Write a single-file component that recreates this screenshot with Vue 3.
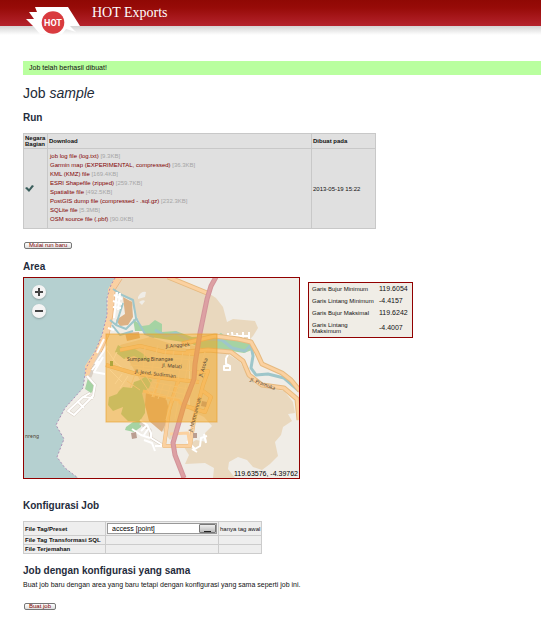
<script setup>
import { ref } from 'vue'

const files = [
  { name: 'job log file (log.txt)', size: '9.3KB' },
  { name: 'Garmin map (EXPERIMENTAL, compressed)', size: '36.3KB' },
  { name: 'KML (KMZ) file', size: '169.4KB' },
  { name: 'ESRI Shapefile (zipped)', size: '259.7KB' },
  { name: 'Spatialite file', size: '492.5KB' },
  { name: 'PostGIS dump file (compressed - .sql.gz)', size: '232.3KB' },
  { name: 'SQLite file', size: '5.3MB' },
  { name: 'OSM source file (.pbf)', size: '90.0KB' },
]

const bounds = [
  { label: 'Garis Bujur Minimum', value: '119.6054' },
  { label: 'Garis Lintang Minimum', value: '-4.4157' },
  { label: 'Garis Bujur Maksimal', value: '119.6242' },
  { label: 'Garis Lintang Maksimum', value: '-4.4007' },
]

const preset = ref('access [point]')
</script>

<template>
  <div class="page">
    <header class="banner">
      <svg class="logo" viewBox="0 0 56 30" aria-hidden="true">
        <path d="M9 1H42L54 20H44L50 26L40 23L36 28H14L8 21L0 13H8L3 6H11Z" fill="#fff" />
        <circle cx="27" cy="16.5" r="11.3" fill="#d93b3f" />
        <text x="27" y="20" text-anchor="middle" class="logo-text">HOT</text>
      </svg>
      <a class="brand" href="#">HOT Exports</a>
    </header>
    <div class="shade"></div>

    <main class="content">
      <p class="notice">Job telah berhasil dibuat!</p>
      <h1>Job <em>sample</em></h1>

      <h2>Run</h2>
      <table class="runs">
        <thead>
          <tr>
            <th class="state">Negara Bagian</th>
            <th>Download</th>
            <th class="date">Dibuat pada</th>
          </tr>
        </thead>
        <tbody>
          <tr>
            <td class="state">
              <svg class="check" viewBox="0 0 9 7" role="img" aria-label="OK">
                <path d="M0 3L2 2L4 4L7 0L9 1L4 7Z" fill="#3b5e5c" />
              </svg>
            </td>
            <td class="downloads">
              <ul>
                <li v-for="f in files" :key="f.name">
                  <a href="#">{{ f.name }}</a> <span>[{{ f.size }}]</span>
                </li>
              </ul>
            </td>
            <td>2013-05-19 15:22</td>
          </tr>
        </tbody>
      </table>
      <button class="action" type="button">Mulai run baru</button>

      <h2 class="area-title">Area</h2>
      <div class="area">
        <div class="map">
          <svg class="tiles" viewBox="24 278 275 200" preserveAspectRatio="xMidYMid slice">
            <rect x="24" y="278" width="275" height="200" fill="#f0ede7" />
            <g fill="#e9d8be">
              <path d="M118 278H168L207 292L216 298L223 307L227 322L233 319L255 321L258 328L253 336L240 350L218 340L196 334L170 332L145 335L136 315L130 300L113 289Z" />
              <path d="M190 345L225 352L240 362L248 376L262 387L284 391L289 397L293 402L295 413L288 414L292 421L283 427L281 435L275 442L278 456L270 464L262 470L253 467L247 460L238 457L229 462L228 469L235 478H213L214 468L205 463L185 464L189 455L184 447L196 440L207 442L205 433L212 426L204 417L190 410Z" />
              <path d="M120 345L150 337L190 350L188 400L177 432L170 440L155 420L143 405L140 380Z" />
            </g>
            <path d="M24 278H115L111 285L107 298L107 315L102 335L95 352L86 368L83 388L65 408L56 425L64 439L57 457L65 468L78 478H24Z" fill="#b5d0d0" />
            <path d="M118 278L111 290L110 315L105 336L97 353L88 367V376" fill="none" stroke="#fad0a2" stroke-width="6" />
            <path d="M122 279L115 290L113 314L109 335L100 355L91 369" fill="none" stroke="#eeb780" stroke-width="1" />
            <path d="M115 278L111 285L107 298L107 315L102 335L95 352L86 368L83 388L65 408L56 425L64 439L57 457L65 468L78 478" fill="none" stroke="#ad91b8" stroke-width="1" stroke-dasharray="2 2" />
            <g fill="#a5d3a3">
              <path d="M133 319L142 326L149 325L155 320L162 324L162 332L176 331L192 337L215 336L221 333L229 339L250 342L252 350L244 353L225 350L205 350L190 343L150 337L143 331L135 331Z" />
              <path d="M88 378L94 382L95 389L91 393L85 389Z" />
              <path d="M126 427L133 422L142 420L141 427L134 432L125 430Z" />
              <path d="M119 391L123 387L132 388L134 382L140 380L145 377L152 380L149 388L142 393L145 405L145 413L140 421L128 421L121 414L123 407L113 411L108 405L109 397L117 394Z" />
              <path d="M118 345L126 350L133 348L142 353L151 361L142 360L134 356L124 359L115 352Z" />
            </g>
            <g fill="#dcb184">
              <path d="M123 297L132 302L133 317L128 325L120 326L116 320L125 314Z" />
              <path d="M125 333L139 332L140 338L127 341Z" />
              <path d="M146 392L166 398L170 414L162 432L149 421L145 405Z" />
            </g>
            <g fill="#f0ede7">
              <path d="M138 297q3-6 8-5l-1 5-7 2zM139 302q4-3 6-1l-3 4z" />
            </g>
            <g fill="none" stroke="#9ec6ca" stroke-linejoin="round">
              <path d="M113 289L122 295L133 300L136 318L145 334L154 337" stroke-width="2" />
              <path d="M110 320L116 325L126 329L137 318M116 325L123 303M112 325L120 335L133 331" stroke-width="2" />
              <path d="M155 330L166 336L176 333L190 341L207 339L222 340L232 348L245 351L251 345L253 356L251 368L256 375L268 374L284 378L299 391" stroke-width="3" />
            </g>
            <g fill="none" stroke="#d9cfc4" stroke-width="3" stroke-linejoin="round">
              <path d="M101 352L94 367L90 377M87 376L95 385L93 396L74 415L68 411L83 397L93 398M77 401L84 408M83 397L90 393M140 423L150 430L151 438L164 446" />
            </g>
            <g fill="none" stroke="#fff" stroke-width="2" stroke-linejoin="round">
              <path d="M114 295L122 299M113 301L122 304M113 307L121 308M117 292L114 318M120 293L118 310M108 328L114 330M104 339L97 353M107 346L95 364M103 357L94 372L105 374M99 361L92 370" />
              <path d="M87 376L95 385L93 396L74 415L68 411L83 397L93 398M77 401L84 408M83 397L90 393" />
              <path d="M140 420L147 425L151 433L151 438L164 446M132 429L141 435L150 438M144 440L152 443L155 451M155 446H173M147 425L141 431M148 429L144 435" />
              <path d="M226 358V364L230 366V370H224V366H229M226 358L228 355M228 333V340M232 332L233 340M237 333L238 341M243 332V341M249 332V340M228 336H250" />
              <path d="M187 441L195 449L200 446L201 438L207 436M192 449L197 452M204 434L206 443" />
              <path d="M107 350L116 363L131 374M110 370L122 382M117 352L111 364M122 374L115 384M128 376L120 388" stroke-width="1" />
            </g>
            <g fill="none" stroke="#e6b97f" stroke-width="5" stroke-linejoin="round">
              <path d="M168 277L207 293M182 344L198 340L215 336L238 339L251 342L257 353L262 364L282 373L291 380L300 391M186 352L208 350L231 352L243 361L249 375L262 385L284 388L297 399L299 420" />
              <path d="M106 365L133 373L163 378L199 382M120 350L140 346L165 352L197 354M194 373L208 371L203 385L194 420L190 446H164L169 410L179 378M182 405L205 412L211 397L203 391" stroke-width="4" />
            </g>
            <g fill="none" stroke="#fbd1a0" stroke-width="3" stroke-linejoin="round">
              <path d="M168 277L207 293M182 344L198 340L215 336L238 339L251 342L257 353L262 364L282 373L291 380L300 391M186 352L208 350L231 352L243 361L249 375L262 385L284 388L297 399L299 420" />
              <path d="M106 365L133 373L163 378L199 382M120 350L140 346L165 352L197 354M194 373L208 371L203 385L194 420L190 446H164L169 410L179 378M182 405L205 412L211 397L203 391" />
              <path d="M170 434L188 433L190 446M143 391L178 400L182 405M159 379L153 397" />
            </g>
            <g fill="none" stroke="#f3ddbe" stroke-width="1">
              <path d="M137 368L173 373M145 347L143 371M158 345L151 373M166 350L160 377M174 351L168 376M183 352L178 379M125 358L156 363M130 365L195 371M190 353L185 379M205 352L192 393M150 356L193 360M135 374L130 388M139 376L150 393M145 374L155 390M127 381L140 390" />
              <path d="M157 382L152 397M164 383L158 399M171 384L166 400M179 384L173 401M186 385L183 402M150 387L188 395M153 382L193 390M150 393L182 399M171 403L166 420M178 401L175 419" />
            </g>
            <g fill="#ba9e91">
              <path d="M202 401L207 402L206 407L201 406ZM193 433H197V438H193ZM131 433L136 432L137 438L132 439Z" />
            </g>
            <path d="M110 361H113V366H110Z" fill="#6ba860" />
            <path d="M216 277L211 286L207 299L200 333L195 364L194 379L184 405L173 443L175 455L184 478" fill="none" stroke="#d2949a" stroke-width="5" />
            <path d="M216 277L211 286L207 299L200 333L195 364L194 379L184 405L173 443L175 455L184 478" fill="none" stroke="#dda0a3" stroke-width="3" />
            <rect x="106" y="334" width="111" height="88" fill="#f4a419" fill-opacity=".5" stroke="#e9a02c" stroke-opacity=".65" />
            <g class="street">
              <text x="127" y="361">Sumpang Binangae</text>
              <text transform="translate(166 348) rotate(-5)">Jl.Anggrek</text>
              <text transform="translate(162 367) rotate(4)">Jl. Melati</text>
              <text transform="translate(135 373) rotate(7)">Jl. Jend. Sudirman</text>
              <text transform="translate(202 377) rotate(-72)">Jl. Asoka</text>
              <text transform="translate(192 432) rotate(-75)">Jl. Mutmainnah</text>
              <text transform="translate(250 381) rotate(20)">Jl. Pramuka</text>
              <text x="25" y="438">nreng</text>
            </g>
          </svg>
          <div class="zoom">
            <button type="button" aria-label="Zoom in">
              <svg viewBox="0 0 14 14"><path d="M6 3H8V6H11V8H8V11H6V8H3V6H6Z" fill="#444" /></svg>
            </button>
            <button type="button" aria-label="Zoom out">
              <svg viewBox="0 0 14 14"><path d="M3 6H11V8H3Z" fill="#444" /></svg>
            </button>
          </div>
          <span class="position">119.63576, -4.39762</span>
        </div>
        <table class="bounds">
          <tbody>
            <tr v-for="b in bounds" :key="b.label">
              <th scope="row">{{ b.label }}</th>
              <td>{{ b.value }}</td>
            </tr>
          </tbody>
        </table>
      </div>

      <h2 class="config-title">Konfigurasi Job</h2>
      <table class="config">
        <tbody>
          <tr>
            <th scope="row"><label for="preset">File Tag/Preset</label></th>
            <td class="choice">
              <span class="picker">
                <select id="preset" v-model="preset">
                  <option>access [point]</option>
                </select>
                <i class="drop"></i>
              </span>
            </td>
            <td>hanya tag awal</td>
          </tr>
          <tr>
            <th scope="row">File Tag Transformasi SQL</th>
            <td></td>
            <td></td>
          </tr>
          <tr>
            <th scope="row">File Terjemahan</th>
            <td></td>
            <td></td>
          </tr>
        </tbody>
      </table>

      <h2 class="same-title">Job dengan konfigurasi yang sama</h2>
      <p class="hint">Buat job baru dengan area yang baru tetapi dengan konfigurasi yang sama seperti job ini.</p>
      <button class="action" type="button">Buat job</button>
    </main>
  </div>
</template>

<style>
body {
  background: #fff;
}
</style>

<style scoped>
.page {
  font: 7px/10px "Liberation Sans", Arial, sans-serif;
  color: #111;
}
.banner {
  position: relative;
  display: flex;
  align-items: center;
  height: 26px;
  padding-left: 92px;
  background: linear-gradient(#900804 0%, #970b08 30%, #b5232d 100%);
}
.brand {
  color: #fff;
  font: 14px/26px "Liberation Serif", serif;
  text-decoration: none;
}
.logo {
  position: absolute;
  left: 26px;
  top: 6px;
  width: 56px;
  height: 30px;
}
.logo-text {
  fill: #fff;
  font: bold 9px Roboto, sans-serif;
}
.shade {
  height: 9px;
  background: linear-gradient(#d4d4d4, #fff);
}
.content {
  padding: 26px 0 12px 23px;
}
p,
h1,
h2,
ul {
  margin: 0;
  padding: 0;
}
.notice {
  padding: 2px 6px;
  background: #b9ff9f;
}
h1 {
  margin-top: 10px;
  font-size: 14px;
  line-height: 16px;
  font-weight: normal;
  color: #222b38;
}
h2 {
  margin: 11px 0 9px;
  font-size: 10px;
  line-height: 12px;
  color: #1f2c3c;
}
table {
  border-collapse: collapse;
  font-size: 6px;
  line-height: 6px;
}
th,
td {
  text-align: left;
}
.runs {
  width: 353px;
  max-width: 100%;
  table-layout: fixed;
  background: #e0e0e0;
}
.runs th,
.runs td {
  padding: 1px;
  border: 1px solid #c8c8c8;
}
.runs th {
  height: 12px;
}
.runs .state {
  width: 21px;
}
.runs .date {
  width: 61px;
}
.runs .downloads {
  padding: 3px 2px 4px;
}
.check {
  display: block;
  width: 9px;
  height: 7px;
}
ul {
  list-style: none;
}
li {
  line-height: 9px;
}
li a {
  color: #800000;
  text-decoration: none;
}
li span {
  color: #a5a5a5;
}
.action {
  display: block;
  height: 7px;
  margin: 13px 0 0 1px;
  padding: 0 4px;
  border: 1px solid #777;
  border-radius: 2px;
  background: linear-gradient(#fff, #ddd);
  color: #800000;
  font: 6px/5px "Liberation Sans", Arial, sans-serif;
}
.area-title {
  margin: 12px 0 4px;
}
.area {
  display: flex;
  align-items: flex-start;
  gap: 8px;
}
.map {
  position: relative;
  width: 275px;
  border: 1px solid #910000;
}
.tiles {
  display: block;
  width: 100%;
  height: auto;
}
.street {
  fill: #4f4030;
  font: 5px "Noto Sans", sans-serif;
}
.zoom {
  position: absolute;
  left: 8px;
  top: 7px;
  display: grid;
  gap: 5px;
}
.zoom button {
  width: 14px;
  height: 14px;
  padding: 0;
  border: 0;
  border-radius: 7px;
  background: #f4f4f4;
  box-shadow: 0 1px 2px #8ba0a0;
}
.zoom svg {
  display: block;
  width: 14px;
  height: 14px;
}
.position {
  position: absolute;
  right: 1px;
  bottom: 0;
  line-height: 8px;
  color: #000;
}
.bounds {
  width: 105px;
  margin-top: 5px;
  border: 1px solid #910000;
  background: #f0ede6;
}
.bounds th,
.bounds td {
  height: 12px;
  padding: 0 1px 0 3px;
}
.bounds th {
  width: 63px;
  font-weight: normal;
}
.bounds tr:last-child th {
  width: 54px;
  height: 18px;
  padding-right: 10px;
}
.bounds td {
  font-size: 7px;
}
.config-title {
  margin-top: 21px;
}
.config {
  background: #eee;
}
.config th,
.config td {
  height: 8px;
  padding: 0 1px;
  border: 1px solid #ccc;
  white-space: nowrap;
}
.config th {
  width: 79px;
}
.config .choice {
  width: 110px;
}
.picker {
  position: relative;
  display: block;
  margin: 1px 0;
}
select {
  display: block;
  appearance: none;
  width: 100%;
  height: 11px;
  padding: 0 4px;
  border: 1px solid #999;
  border-radius: 0;
  background: #fff;
  color: #000;
  font: 7px/9px "Liberation Sans", Arial, sans-serif;
}
.drop {
  position: absolute;
  right: 1px;
  top: 1px;
  width: 15px;
  height: 7px;
  border: 1px solid #777;
  border-radius: 1px;
  background: linear-gradient(#eee, #bbb);
  pointer-events: none;
}
.drop::after {
  content: "";
  position: absolute;
  left: 4px;
  bottom: 0;
  width: 7px;
  height: 1px;
  background: #222;
}
.same-title {
  margin: 11px 0 3px;
}
</style>
